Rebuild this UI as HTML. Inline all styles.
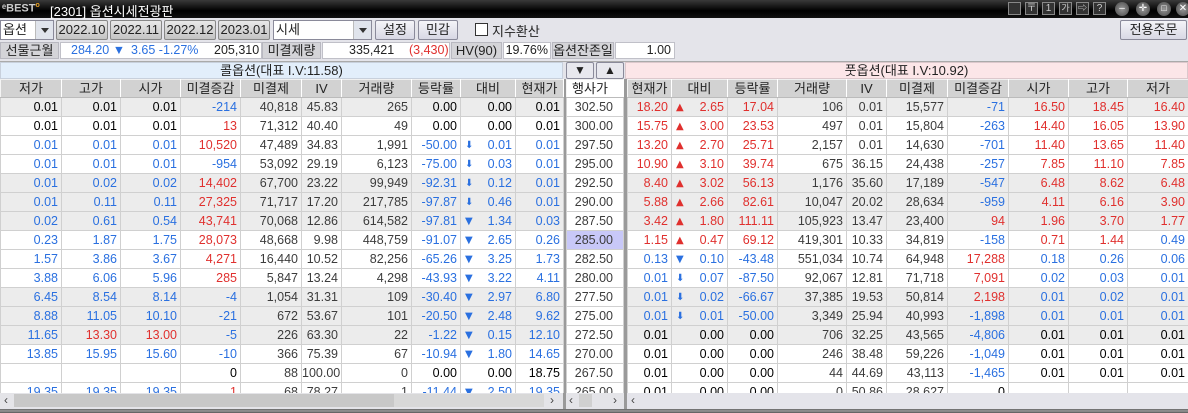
<!DOCTYPE html>
<html><head><meta charset="utf-8">
<style>
*{box-sizing:border-box;margin:0;padding:0}
body{width:1188px;height:413px;overflow:hidden;background:#e4e4ea;font-family:"Liberation Sans","Noto Sans CJK KR",sans-serif;font-size:12px;color:#222;position:relative}
.abs{position:absolute}
#title{left:0;top:0;width:1188px;height:18px;background:linear-gradient(#3a3a3a,#000 60%,#111)}
.btn{position:absolute;height:20px;border:1px solid #8a8a9a;background:linear-gradient(#f4f4f8,#d8d8e4);text-align:center;line-height:18px;font-size:13px;border-radius:2px}
.mon{background:linear-gradient(#e8e8e8,#c4c4c4);border-color:#888}
.combo{position:absolute;height:20px;background:#fff;border:1px solid #8a8a9a;font-size:13px;line-height:18px;padding-left:2px}
.combo i{position:absolute;right:0;top:0;width:18px;height:18px;background:#e0e4ec;border-left:1px solid #bbb}
.combo i:after{content:"";position:absolute;left:5px;top:7px;border-left:4px solid transparent;border-right:4px solid transparent;border-top:5px solid #333}
.lab{position:absolute;top:42px;height:17px;background:#d4d4d8;border:1px solid #b8b8c0;text-align:center;line-height:15px;font-size:13px}
.val{position:absolute;top:42px;height:17px;background:#fff;border:1px solid #c0c0c8;line-height:15px;font-size:12.5px}
table{position:absolute;border-collapse:collapse;table-layout:fixed;top:79px}
td{height:19px;border:1px solid #d0d0d0;text-align:right;padding:0 3px 0 0;white-space:nowrap;overflow:hidden;line-height:17px;color:#3c3c3c;font-size:12.5px}
tr.h td{height:18px;background:#d2d2d2;text-align:center;color:#222;font-size:13px;border-color:#f0f0f0 #fff #bbb #f4f4f4;padding:0}
tr.g td{background:#ececec}
tr.w td{background:#fff}
.b{color:#2a70e0!important}.r{color:#e0302e!important}.k{color:#000!important}
.ar{float:left;padding-left:4px;font-size:10px;font-family:"DejaVu Sans",sans-serif}
#strike td{background:#fff!important;padding-right:10px}
</style></head><body>
<div id="title" class="abs">
 <div class="abs" style="left:2px;top:2px;color:#ccc;font-size:11px;font-weight:bold">ᵉBEST<sup style="color:#e8a020;font-size:7px">o</sup></div>
 <div class="abs" style="left:50px;top:1px;color:#fff;font-size:13px">[2301] 옵션시세전광판</div>
 <div class="abs" style="left:1008px;top:2px;width:13px;height:13px;border:1px solid #888;background:#333"></div>
 <div class="abs" style="left:1025px;top:2px;width:13px;height:13px;border:1px solid #888;background:#333;color:#ccc;font-size:10px;line-height:11px;text-align:center">〒</div>
 <div class="abs" style="left:1042px;top:2px;width:13px;height:13px;border:1px solid #888;background:#333;color:#ccc;font-size:10px;line-height:11px;text-align:center">1</div>
 <div class="abs" style="left:1059px;top:2px;width:13px;height:13px;border:1px solid #888;background:#333;color:#ccc;font-size:9px;line-height:11px;text-align:center">가</div>
 <div class="abs" style="left:1076px;top:2px;width:13px;height:13px;border:1px solid #888;background:#333;color:#ccc;font-size:9px;line-height:11px;text-align:center">⇨</div>
 <div class="abs" style="left:1093px;top:2px;width:13px;height:13px;border:1px solid #888;background:#333;color:#ccc;font-size:10px;line-height:11px;text-align:center">?</div>
 <div class="abs" style="left:1115px;top:2px;width:14px;height:14px;border-radius:50%;background:radial-gradient(#999,#444);color:#fff;font-size:10px;line-height:13px;text-align:center">–</div>
 <div class="abs" style="left:1136px;top:2px;width:14px;height:14px;border-radius:50%;background:radial-gradient(#999,#444);color:#fff;font-size:10px;line-height:13px;text-align:center">✛</div>
 <div class="abs" style="left:1157px;top:2px;width:14px;height:14px;border-radius:50%;background:radial-gradient(#999,#444);color:#fff;font-size:9px;line-height:13px;text-align:center">□</div>
 <div class="abs" style="left:1176px;top:2px;width:14px;height:14px;border-radius:50%;background:radial-gradient(#999,#444);color:#fff;font-size:10px;line-height:13px;text-align:center">✕</div>
</div>
<div class="combo" style="left:0;top:20px;width:54px">옵션<i></i></div>
<div class="btn mon" style="left:56px;top:20px;width:52px">2022.10</div>
<div class="btn mon" style="left:110px;top:20px;width:52px">2022.11</div>
<div class="btn mon" style="left:164px;top:20px;width:52px">2022.12</div>
<div class="btn mon" style="left:218px;top:20px;width:52px">2023.01</div>
<div class="combo" style="left:273px;top:20px;width:99px">시세<i></i></div>
<div class="btn" style="left:375px;top:20px;width:40px">설정</div>
<div class="btn" style="left:418px;top:20px;width:40px">민감</div>
<div class="abs" style="left:475px;top:23px;width:13px;height:13px;border:1px solid #333;background:#fff"></div>
<div class="abs" style="left:492px;top:21px;font-size:13px">지수환산</div>
<div class="btn" style="left:1120px;top:20px;width:67px">전용주문</div>

<div class="lab" style="left:0;width:59px">선물근월</div>
<div class="val" style="left:60px;width:202px"><span class="b abs" style="left:10px">284.20 ▼</span><span class="b abs" style="left:70px">3.65 -1.27%</span><span class="abs" style="left:153px">205,310</span></div>
<div class="lab" style="left:262px;width:59px">미결제량</div>
<div class="val" style="left:322px;width:128px"><span class="abs" style="left:26px">335,421</span><span class="abs r" style="left:86px">(3,430)</span></div>
<div class="lab" style="left:451px;width:51px">HV(90)</div>
<div class="val" style="left:503px;width:48px;text-align:right;padding-right:2px">19.76%</div>
<div class="lab" style="left:552px;width:62px">옵션잔존일</div>
<div class="val" style="left:615px;width:60px;text-align:right;padding-right:3px">1.00</div>

<div class="abs" style="left:0;top:61px;width:1188px;height:1px;background:#aaa"></div>
<div class="abs" style="left:0;top:62px;width:563px;height:17px;background:#e2eefb;border:1px solid #c8d0dc;text-align:center;line-height:15px;font-size:13px">콜옵션(대표 I.V:11.58)</div>
<div class="abs" style="left:625px;top:62px;width:563px;height:17px;background:#fce6e8;border:1px solid #dcc8cc;text-align:center;line-height:15px;font-size:13px">풋옵션(대표 I.V:10.92)</div>
<div class="btn" style="left:566px;top:62px;width:28px;height:17px;line-height:15px;font-size:12px;background:#e8e8ee">▼</div>
<div class="btn" style="left:596px;top:62px;width:28px;height:17px;line-height:15px;font-size:12px;background:#e8e8ee">▲</div>
<div class="abs" style="left:563px;top:79px;width:3px;height:316px;background:#9a9a9a"></div>
<div class="abs" style="left:624px;top:79px;width:3px;height:316px;background:#9a9a9a"></div>

<table style="left:0;width:563px">
<colgroup><col style="width:61px"><col style="width:59px"><col style="width:60px"><col style="width:60px"><col style="width:61px"><col style="width:40px"><col style="width:70px"><col style="width:49px"><col style="width:55px"><col style="width:48px"></colgroup>
<tr class="h"><td>저가</td><td>고가</td><td>시가</td><td>미결증감</td><td>미결제</td><td>IV</td><td>거래량</td><td>등락률</td><td>대비</td><td>현재가</td></tr>
<tr class="g"><td class="k">0.01</td><td class="k">0.01</td><td class="k">0.01</td><td class="b">-214</td><td>40,818</td><td>45.83</td><td>265</td><td class="k">0.00</td><td class="k">0.00</td><td class="k">0.01</td></tr>
<tr class="w"><td class="k">0.01</td><td class="k">0.01</td><td class="k">0.01</td><td class="r">13</td><td>71,312</td><td>40.40</td><td>49</td><td class="k">0.00</td><td class="k">0.00</td><td class="k">0.01</td></tr>
<tr class="w"><td class="b">0.01</td><td class="b">0.01</td><td class="b">0.01</td><td class="r">10,520</td><td>47,489</td><td>34.83</td><td>1,991</td><td class="b">-50.00</td><td class="b"><span class="ar">⬇</span>0.01</td><td class="b">0.01</td></tr>
<tr class="w"><td class="b">0.01</td><td class="b">0.01</td><td class="b">0.01</td><td class="b">-954</td><td>53,092</td><td>29.19</td><td>6,123</td><td class="b">-75.00</td><td class="b"><span class="ar">⬇</span>0.03</td><td class="b">0.01</td></tr>
<tr class="g"><td class="b">0.01</td><td class="b">0.02</td><td class="b">0.02</td><td class="r">14,402</td><td>67,700</td><td>23.22</td><td>99,949</td><td class="b">-92.31</td><td class="b"><span class="ar">⬇</span>0.12</td><td class="b">0.01</td></tr>
<tr class="g"><td class="b">0.01</td><td class="b">0.11</td><td class="b">0.11</td><td class="r">27,325</td><td>71,717</td><td>17.20</td><td>217,785</td><td class="b">-97.87</td><td class="b"><span class="ar">⬇</span>0.46</td><td class="b">0.01</td></tr>
<tr class="g"><td class="b">0.02</td><td class="b">0.61</td><td class="b">0.54</td><td class="r">43,741</td><td>70,068</td><td>12.86</td><td>614,582</td><td class="b">-97.81</td><td class="b"><span class="ar">▼</span>1.34</td><td class="b">0.03</td></tr>
<tr class="w"><td class="b">0.23</td><td class="b">1.87</td><td class="b">1.75</td><td class="r">28,073</td><td>48,668</td><td>9.98</td><td>448,759</td><td class="b">-91.07</td><td class="b"><span class="ar">▼</span>2.65</td><td class="b">0.26</td></tr>
<tr class="w"><td class="b">1.57</td><td class="b">3.86</td><td class="b">3.67</td><td class="r">4,271</td><td>16,440</td><td>10.52</td><td>82,256</td><td class="b">-65.26</td><td class="b"><span class="ar">▼</span>3.25</td><td class="b">1.73</td></tr>
<tr class="w"><td class="b">3.88</td><td class="b">6.06</td><td class="b">5.96</td><td class="r">285</td><td>5,847</td><td>13.24</td><td>4,298</td><td class="b">-43.93</td><td class="b"><span class="ar">▼</span>3.22</td><td class="b">4.11</td></tr>
<tr class="g"><td class="b">6.45</td><td class="b">8.54</td><td class="b">8.14</td><td class="b">-4</td><td>1,054</td><td>31.31</td><td>109</td><td class="b">-30.40</td><td class="b"><span class="ar">▼</span>2.97</td><td class="b">6.80</td></tr>
<tr class="g"><td class="b">8.88</td><td class="b">11.05</td><td class="b">10.10</td><td class="b">-21</td><td>672</td><td>53.67</td><td>101</td><td class="b">-20.50</td><td class="b"><span class="ar">▼</span>2.48</td><td class="b">9.62</td></tr>
<tr class="g"><td class="b">11.65</td><td class="r">13.30</td><td class="r">13.00</td><td class="b">-5</td><td>226</td><td>63.30</td><td>22</td><td class="b">-1.22</td><td class="b"><span class="ar">▼</span>0.15</td><td class="b">12.10</td></tr>
<tr class="w"><td class="b">13.85</td><td class="b">15.95</td><td class="b">15.60</td><td class="b">-10</td><td>366</td><td>75.39</td><td>67</td><td class="b">-10.94</td><td class="b"><span class="ar">▼</span>1.80</td><td class="b">14.65</td></tr>
<tr class="w"><td></td><td></td><td></td><td class="k">0</td><td>88</td><td>100.00</td><td>0</td><td class="k">0.00</td><td class="k">0.00</td><td class="k">18.75</td></tr>
<tr class="w"><td class="b">19.35</td><td class="b">19.35</td><td class="b">19.35</td><td class="r">1</td><td>68</td><td>78.27</td><td>1</td><td class="b">-11.44</td><td class="b"><span class="ar">▼</span>2.50</td><td class="b">19.35</td></tr>
</table>

<table id="strike" style="left:566px;width:58px">
<tr class="h"><td>행사가</td></tr>
<tr><td>302.50</td></tr><tr><td>300.00</td></tr><tr><td>297.50</td></tr><tr><td>295.00</td></tr><tr><td>292.50</td></tr><tr><td>290.00</td></tr><tr><td>287.50</td></tr><tr><td style="background:#c8c8f8!important">285.00</td></tr><tr><td>282.50</td></tr><tr><td>280.00</td></tr><tr><td>277.50</td></tr><tr><td>275.00</td></tr><tr><td>272.50</td></tr><tr><td>270.00</td></tr><tr><td>267.50</td></tr><tr><td>265.00</td></tr>
</table>

<table style="left:627px;width:561px">
<colgroup><col style="width:44px"><col style="width:56px"><col style="width:50px"><col style="width:69px"><col style="width:40px"><col style="width:61px"><col style="width:61px"><col style="width:60px"><col style="width:59px"><col style="width:61px"></colgroup>
<tr class="h"><td>현재가</td><td>대비</td><td>등락률</td><td>거래량</td><td>IV</td><td>미결제</td><td>미결증감</td><td>시가</td><td>고가</td><td>저가</td></tr>
<tr class="g"><td class="r">18.20</td><td class="r"><span class="ar">▲</span>2.65</td><td class="r">17.04</td><td>106</td><td>0.01</td><td>15,577</td><td class="b">-71</td><td class="r">16.50</td><td class="r">18.45</td><td class="r">16.40</td></tr>
<tr class="w"><td class="r">15.75</td><td class="r"><span class="ar">▲</span>3.00</td><td class="r">23.53</td><td>497</td><td>0.01</td><td>15,804</td><td class="b">-263</td><td class="r">14.40</td><td class="r">16.05</td><td class="r">13.90</td></tr>
<tr class="w"><td class="r">13.20</td><td class="r"><span class="ar">▲</span>2.70</td><td class="r">25.71</td><td>2,157</td><td>0.01</td><td>14,630</td><td class="b">-701</td><td class="r">11.40</td><td class="r">13.65</td><td class="r">11.40</td></tr>
<tr class="w"><td class="r">10.90</td><td class="r"><span class="ar">▲</span>3.10</td><td class="r">39.74</td><td>675</td><td>36.15</td><td>24,438</td><td class="b">-257</td><td class="r">7.85</td><td class="r">11.10</td><td class="r">7.85</td></tr>
<tr class="g"><td class="r">8.40</td><td class="r"><span class="ar">▲</span>3.02</td><td class="r">56.13</td><td>1,176</td><td>35.60</td><td>17,189</td><td class="b">-547</td><td class="r">6.48</td><td class="r">8.62</td><td class="r">6.48</td></tr>
<tr class="g"><td class="r">5.88</td><td class="r"><span class="ar">▲</span>2.66</td><td class="r">82.61</td><td>10,047</td><td>20.02</td><td>28,634</td><td class="b">-959</td><td class="r">4.11</td><td class="r">6.16</td><td class="r">3.90</td></tr>
<tr class="g"><td class="r">3.42</td><td class="r"><span class="ar">▲</span>1.80</td><td class="r">111.11</td><td>105,923</td><td>13.47</td><td>23,400</td><td class="r">94</td><td class="r">1.96</td><td class="r">3.70</td><td class="r">1.77</td></tr>
<tr class="w"><td class="r">1.15</td><td class="r"><span class="ar">▲</span>0.47</td><td class="r">69.12</td><td>419,301</td><td>10.33</td><td>34,819</td><td class="b">-158</td><td class="r">0.71</td><td class="r">1.44</td><td class="b">0.49</td></tr>
<tr class="w"><td class="b">0.13</td><td class="b"><span class="ar">▼</span>0.10</td><td class="b">-43.48</td><td>551,034</td><td>10.74</td><td>64,948</td><td class="r">17,288</td><td class="b">0.18</td><td class="b">0.26</td><td class="b">0.06</td></tr>
<tr class="w"><td class="b">0.01</td><td class="b"><span class="ar">⬇</span>0.07</td><td class="b">-87.50</td><td>92,067</td><td>12.81</td><td>71,718</td><td class="r">7,091</td><td class="b">0.02</td><td class="b">0.03</td><td class="b">0.01</td></tr>
<tr class="g"><td class="b">0.01</td><td class="b"><span class="ar">⬇</span>0.02</td><td class="b">-66.67</td><td>37,385</td><td>19.53</td><td>50,814</td><td class="r">2,198</td><td class="b">0.01</td><td class="b">0.02</td><td class="b">0.01</td></tr>
<tr class="g"><td class="b">0.01</td><td class="b"><span class="ar">⬇</span>0.01</td><td class="b">-50.00</td><td>3,349</td><td>25.94</td><td>40,993</td><td class="b">-1,898</td><td class="b">0.01</td><td class="b">0.01</td><td class="b">0.01</td></tr>
<tr class="g"><td class="k">0.01</td><td class="k">0.00</td><td class="k">0.00</td><td>706</td><td>32.25</td><td>43,565</td><td class="b">-4,806</td><td class="k">0.01</td><td class="k">0.01</td><td class="k">0.01</td></tr>
<tr class="w"><td class="k">0.01</td><td class="k">0.00</td><td class="k">0.00</td><td>246</td><td>38.48</td><td>59,226</td><td class="b">-1,049</td><td class="k">0.01</td><td class="k">0.01</td><td class="k">0.01</td></tr>
<tr class="w"><td class="k">0.01</td><td class="k">0.00</td><td class="k">0.00</td><td>44</td><td>44.69</td><td>43,113</td><td class="b">-1,465</td><td class="k">0.01</td><td class="k">0.01</td><td class="k">0.01</td></tr>
<tr class="w"><td class="k">0.01</td><td class="k">0.00</td><td class="k">0.00</td><td>0</td><td>50.86</td><td>28,627</td><td class="k">0</td><td class="k"></td><td class="k"></td><td class="k"></td></tr>
</table>

<div class="abs" style="left:0;top:393px;width:1188px;height:16px;background:#e4e4ea"></div>
<div class="abs" style="left:0;top:393px;width:563px;height:15px;background:#e4e4e8"><span class="abs" style="left:4px;top:0;font-size:12px;color:#444">‹</span><div class="abs" style="left:14px;top:1px;width:380px;height:13px;background:#c8c8c8"></div><div class="abs" style="left:394px;top:1px;width:150px;height:13px;background:#d8d8d8"></div><span class="abs" style="left:550px;top:0;color:#444">›</span></div>
<div class="abs" style="left:566px;top:393px;width:58px;height:15px;background:#e4e4e8"><span class="abs" style="left:3px;top:0;color:#444">‹</span><div class="abs" style="left:13px;top:1px;width:13px;height:13px;background:#d0d0d0"></div><span class="abs" style="left:47px;top:0;color:#444">›</span></div>
<div class="abs" style="left:627px;top:393px;width:30px;height:15px"><span class="abs" style="left:4px;top:0;color:#444">‹</span></div>
<div class="abs" style="left:563px;top:393px;width:3px;height:16px;background:#9a9a9a"></div>
<div class="abs" style="left:624px;top:393px;width:3px;height:16px;background:#9a9a9a"></div>
<div class="abs" style="left:0;top:409px;width:1188px;height:4px;background:linear-gradient(#666,#999 50%,#555)"></div>
</body></html>
